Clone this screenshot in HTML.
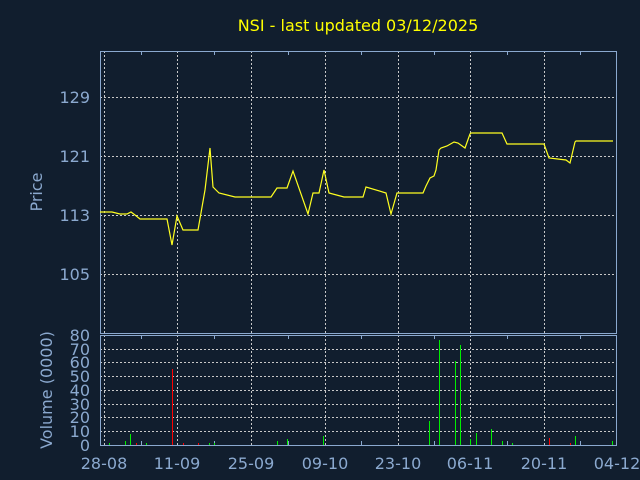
<!DOCTYPE html>
<html><head><style>
body{margin:0;background:#111e2e;}
svg{display:block}
text{font-family:"DejaVu Sans","Liberation Sans",sans-serif;fill:#8ba9cf}
</style></head><body>
<svg width="640" height="480" viewBox="0 0 640 480" xmlns="http://www.w3.org/2000/svg">
<rect width="640" height="480" fill="#111e2e"/>
<text x="358" y="31" text-anchor="middle" font-size="16" style="fill:#ffff00">NSI - last updated 03/12/2025</text>
<g stroke="#c8c8c8" stroke-dasharray="2,2" stroke-width="1">
<line x1="100" y1="97.5" x2="617" y2="97.5"/>
<line x1="100" y1="156.5" x2="617" y2="156.5"/>
<line x1="100" y1="215.5" x2="617" y2="215.5"/>
<line x1="100" y1="274.5" x2="617" y2="274.5"/>
<line x1="100" y1="349.5" x2="617" y2="349.5"/>
<line x1="100" y1="362.5" x2="617" y2="362.5"/>
<line x1="100" y1="376.5" x2="617" y2="376.5"/>
<line x1="100" y1="390.5" x2="617" y2="390.5"/>
<line x1="100" y1="404.5" x2="617" y2="404.5"/>
<line x1="100" y1="417.5" x2="617" y2="417.5"/>
<line x1="100" y1="431.5" x2="617" y2="431.5"/>
<g>
<line x1="104.5" y1="51" x2="104.5" y2="445"/>
<line x1="177.5" y1="51" x2="177.5" y2="445"/>
<line x1="251.5" y1="51" x2="251.5" y2="445"/>
<line x1="325.5" y1="51" x2="325.5" y2="445"/>
<line x1="398.5" y1="51" x2="398.5" y2="445"/>
<line x1="470.5" y1="51" x2="470.5" y2="445"/>
<line x1="544.5" y1="51" x2="544.5" y2="445"/>
</g>
</g>
<g stroke="#8ba9cf" fill="none" stroke-width="1">
<rect x="100.5" y="51.5" width="516" height="282"/>
<rect x="100.5" y="335.5" width="516" height="110"/>
<path d="M141.5 51v4M214.5 51v4M288.5 51v4M361.5 51v4M434.5 51v4M507.5 51v4M580.5 51v4M141.5 335v4M214.5 335v4M288.5 335v4M361.5 335v4M434.5 335v4M507.5 335v4M580.5 335v4M141.5 445v-4M214.5 445v-4M288.5 445v-4M361.5 445v-4M434.5 445v-4M507.5 445v-4M580.5 445v-4"/>
</g>
<polyline fill="none" stroke="#ffff20" stroke-width="1.2" points="100,212 112,212 120,214 127,214 131,212 135,215 140,219 167,219 172,245 177,216 183,230 198,230 205,190 210,148 213,187 219,193 235,197 271,197 277,188 287,188 293,171 308,214 313,193 319,193 324,170 329,193 344,197 363,197 366,187 386,193 391,214 397,193 423,193 426,186 430,178 434,176 436,170 439,150 441,148 447,146 454,142 458,143 465,148 470,134 471,133 502,133 507,144 544,144 549,158 566,160 570,163 575,142 576,141 613,141"/>
<g stroke="#00ee00" stroke-width="1">
<line x1="109.5" y1="445" x2="109.5" y2="443"/>
<line x1="125.5" y1="445" x2="125.5" y2="441"/>
<line x1="130.5" y1="445" x2="130.5" y2="434"/>
<line x1="146.5" y1="445" x2="146.5" y2="443"/>
<line x1="209.5" y1="445" x2="209.5" y2="443"/>
<line x1="214.5" y1="445" x2="214.5" y2="443"/>
<line x1="277.5" y1="445" x2="277.5" y2="441"/>
<line x1="287.5" y1="445" x2="287.5" y2="439"/>
<line x1="323.5" y1="445" x2="323.5" y2="436"/>
<line x1="429.5" y1="445" x2="429.5" y2="421"/>
<line x1="439.5" y1="445" x2="439.5" y2="340"/>
<line x1="455.5" y1="445" x2="455.5" y2="361"/>
<line x1="460.5" y1="445" x2="460.5" y2="345"/>
<line x1="470.5" y1="445" x2="470.5" y2="439"/>
<line x1="476.5" y1="445" x2="476.5" y2="433"/>
<line x1="491.5" y1="445" x2="491.5" y2="429"/>
<line x1="502.5" y1="445" x2="502.5" y2="441"/>
<line x1="512.5" y1="445" x2="512.5" y2="443"/>
<line x1="575.5" y1="445" x2="575.5" y2="436"/>
<line x1="612.5" y1="445" x2="612.5" y2="441"/>
</g>
<g stroke="#ff0000" stroke-width="1">
<line x1="172.5" y1="445" x2="172.5" y2="369"/>
<line x1="136.5" y1="445" x2="136.5" y2="443"/>
<line x1="183.5" y1="445" x2="183.5" y2="443"/>
<line x1="198.5" y1="445" x2="198.5" y2="443"/>
<line x1="549.5" y1="445" x2="549.5" y2="438"/>
<line x1="570.5" y1="445" x2="570.5" y2="443"/>
</g>
<g font-size="16" text-anchor="end">
<text x="90" y="103">129</text>
<text x="90" y="162">121</text>
<text x="90" y="221">113</text>
<text x="90" y="280">105</text>
<text x="90" y="341">80</text>
<text x="90" y="355">70</text>
<text x="90" y="368">60</text>
<text x="90" y="382">50</text>
<text x="90" y="396">40</text>
<text x="90" y="410">30</text>
<text x="90" y="423">20</text>
<text x="90" y="437">10</text>
<text x="90" y="451">0</text>
</g>
<g font-size="16" text-anchor="middle">
<text x="104" y="469">28-08</text>
<text x="177" y="469">11-09</text>
<text x="251" y="469">25-09</text>
<text x="325" y="469">09-10</text>
<text x="398" y="469">23-10</text>
<text x="470" y="469">06-11</text>
<text x="544" y="469">20-11</text>
<text x="617" y="469">04-12</text>
</g>
<text font-size="16" text-anchor="middle" transform="translate(42,192) rotate(-90)">Price</text>
<text font-size="16" text-anchor="middle" transform="translate(52,390) rotate(-90)">Volume (0000)</text>
</svg>
</body></html>
